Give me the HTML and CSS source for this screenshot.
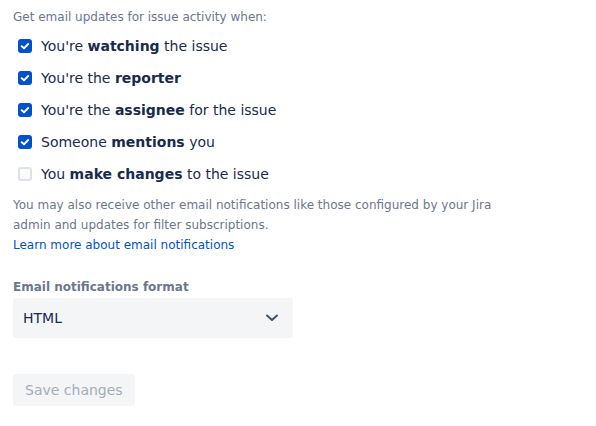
FILE: index.html
```html
<!DOCTYPE html>
<html>
<head>
<meta charset="utf-8">
<link rel="stylesheet" href="styles.css">
</head>
<body>
<div class="page">
  <p class="intro">Get email updates for issue activity when:</p>
  <ul class="checks">
    <li class="row"><span class="box on"><svg viewBox="0 0 14 14" width="14" height="14"><path d="M3.8 7.2l2.2 2.2 4.2-4.4" fill="none" stroke="#fff" stroke-width="2" stroke-linecap="round" stroke-linejoin="round"/></svg></span><span class="lbl">You're <b>watching</b> the issue</span></li>
    <li class="row"><span class="box on"><svg viewBox="0 0 14 14" width="14" height="14"><path d="M3.8 7.2l2.2 2.2 4.2-4.4" fill="none" stroke="#fff" stroke-width="2" stroke-linecap="round" stroke-linejoin="round"/></svg></span><span class="lbl">You're the <b>reporter</b></span></li>
    <li class="row"><span class="box on"><svg viewBox="0 0 14 14" width="14" height="14"><path d="M3.8 7.2l2.2 2.2 4.2-4.4" fill="none" stroke="#fff" stroke-width="2" stroke-linecap="round" stroke-linejoin="round"/></svg></span><span class="lbl">You're the <b>assignee</b> for the issue</span></li>
    <li class="row"><span class="box on"><svg viewBox="0 0 14 14" width="14" height="14"><path d="M3.8 7.2l2.2 2.2 4.2-4.4" fill="none" stroke="#fff" stroke-width="2" stroke-linecap="round" stroke-linejoin="round"/></svg></span><span class="lbl">Someone <b>mentions</b> you</span></li>
    <li class="row"><span class="box off"></span><span class="lbl">You <b>make changes</b> to the issue</span></li>
  </ul>
  <p class="note">You may also receive other email notifications like those configured by your Jira admin and updates for filter subscriptions.<br><a href="#" class="link">Learn more about email notifications</a></p>
  <label class="field-label">Email notifications format</label>
  <div class="select">
    <span class="value">HTML</span>
    <svg class="chev" viewBox="0 0 14 8" width="14" height="8"><path d="M2 1.5l5 4.5 5-4.5" fill="none" stroke="#42526e" stroke-width="2" stroke-linecap="round" stroke-linejoin="round"/></svg>
  </div>
  <button class="save" disabled>Save changes</button>
</div>
</body>
</html>
```
FILE: styles.css
```css
html, body {
  margin: 0;
  padding: 0;
  background: #fff;
}
body {
  font-family: "DejaVu Sans", "Noto Sans", sans-serif;
  color: #172b4d;
}
.page {
  padding: 7px 13px 0 13px;
}
.intro {
  margin: 0;
  font-size: 12px;
  line-height: 20px;
  color: #6b778c;
}
.checks {
  list-style: none;
  margin: 3px 0 0 0;
  padding: 0;
}
.row {
  display: flex;
  align-items: center;
  height: 32px;
  padding-left: 5px;
}
.box {
  width: 14px;
  height: 14px;
  box-sizing: border-box;
  border-radius: 3px;
  display: flex;
  flex: none;
}
.box.on {
  background: #0052cc;
}
.box.off {
  background: #fafbfc;
  border: 2px solid #dfe1e6;
}
.lbl {
  margin-left: 9px;
  font-size: 14px;
  line-height: 20px;
  color: #172b4d;
}
.lbl b {
  font-weight: bold;
}
.note {
  margin: 5px 0 0 0;
  max-width: 500px;
  font-size: 12px;
  line-height: 20px;
  color: #6b778c;
}
.link {
  color: #0052cc;
  text-decoration: none;
}
.field-label {
  display: block;
  margin-top: 24px;
  font-size: 12px;
  font-weight: bold;
  line-height: 16px;
  color: #6b778c;
}
.select {
  margin-top: 3px;
  width: 280px;
  height: 40px;
  box-sizing: border-box;
  background: #f4f5f7;
  border-radius: 3px;
  display: flex;
  align-items: center;
  justify-content: space-between;
  padding: 0 14px 0 10px;
}
.value {
  font-size: 14px;
  color: #172b4d;
}
.chev {
  display: block;
}
.save {
  display: block;
  margin-top: 36px;
  height: 32px;
  padding: 0 12px;
  border: none;
  border-radius: 3px;
  background: #f4f5f7;
  color: #a5adba;
  font-family: "DejaVu Sans", "Noto Sans", sans-serif;
  font-size: 14px;
}
```
